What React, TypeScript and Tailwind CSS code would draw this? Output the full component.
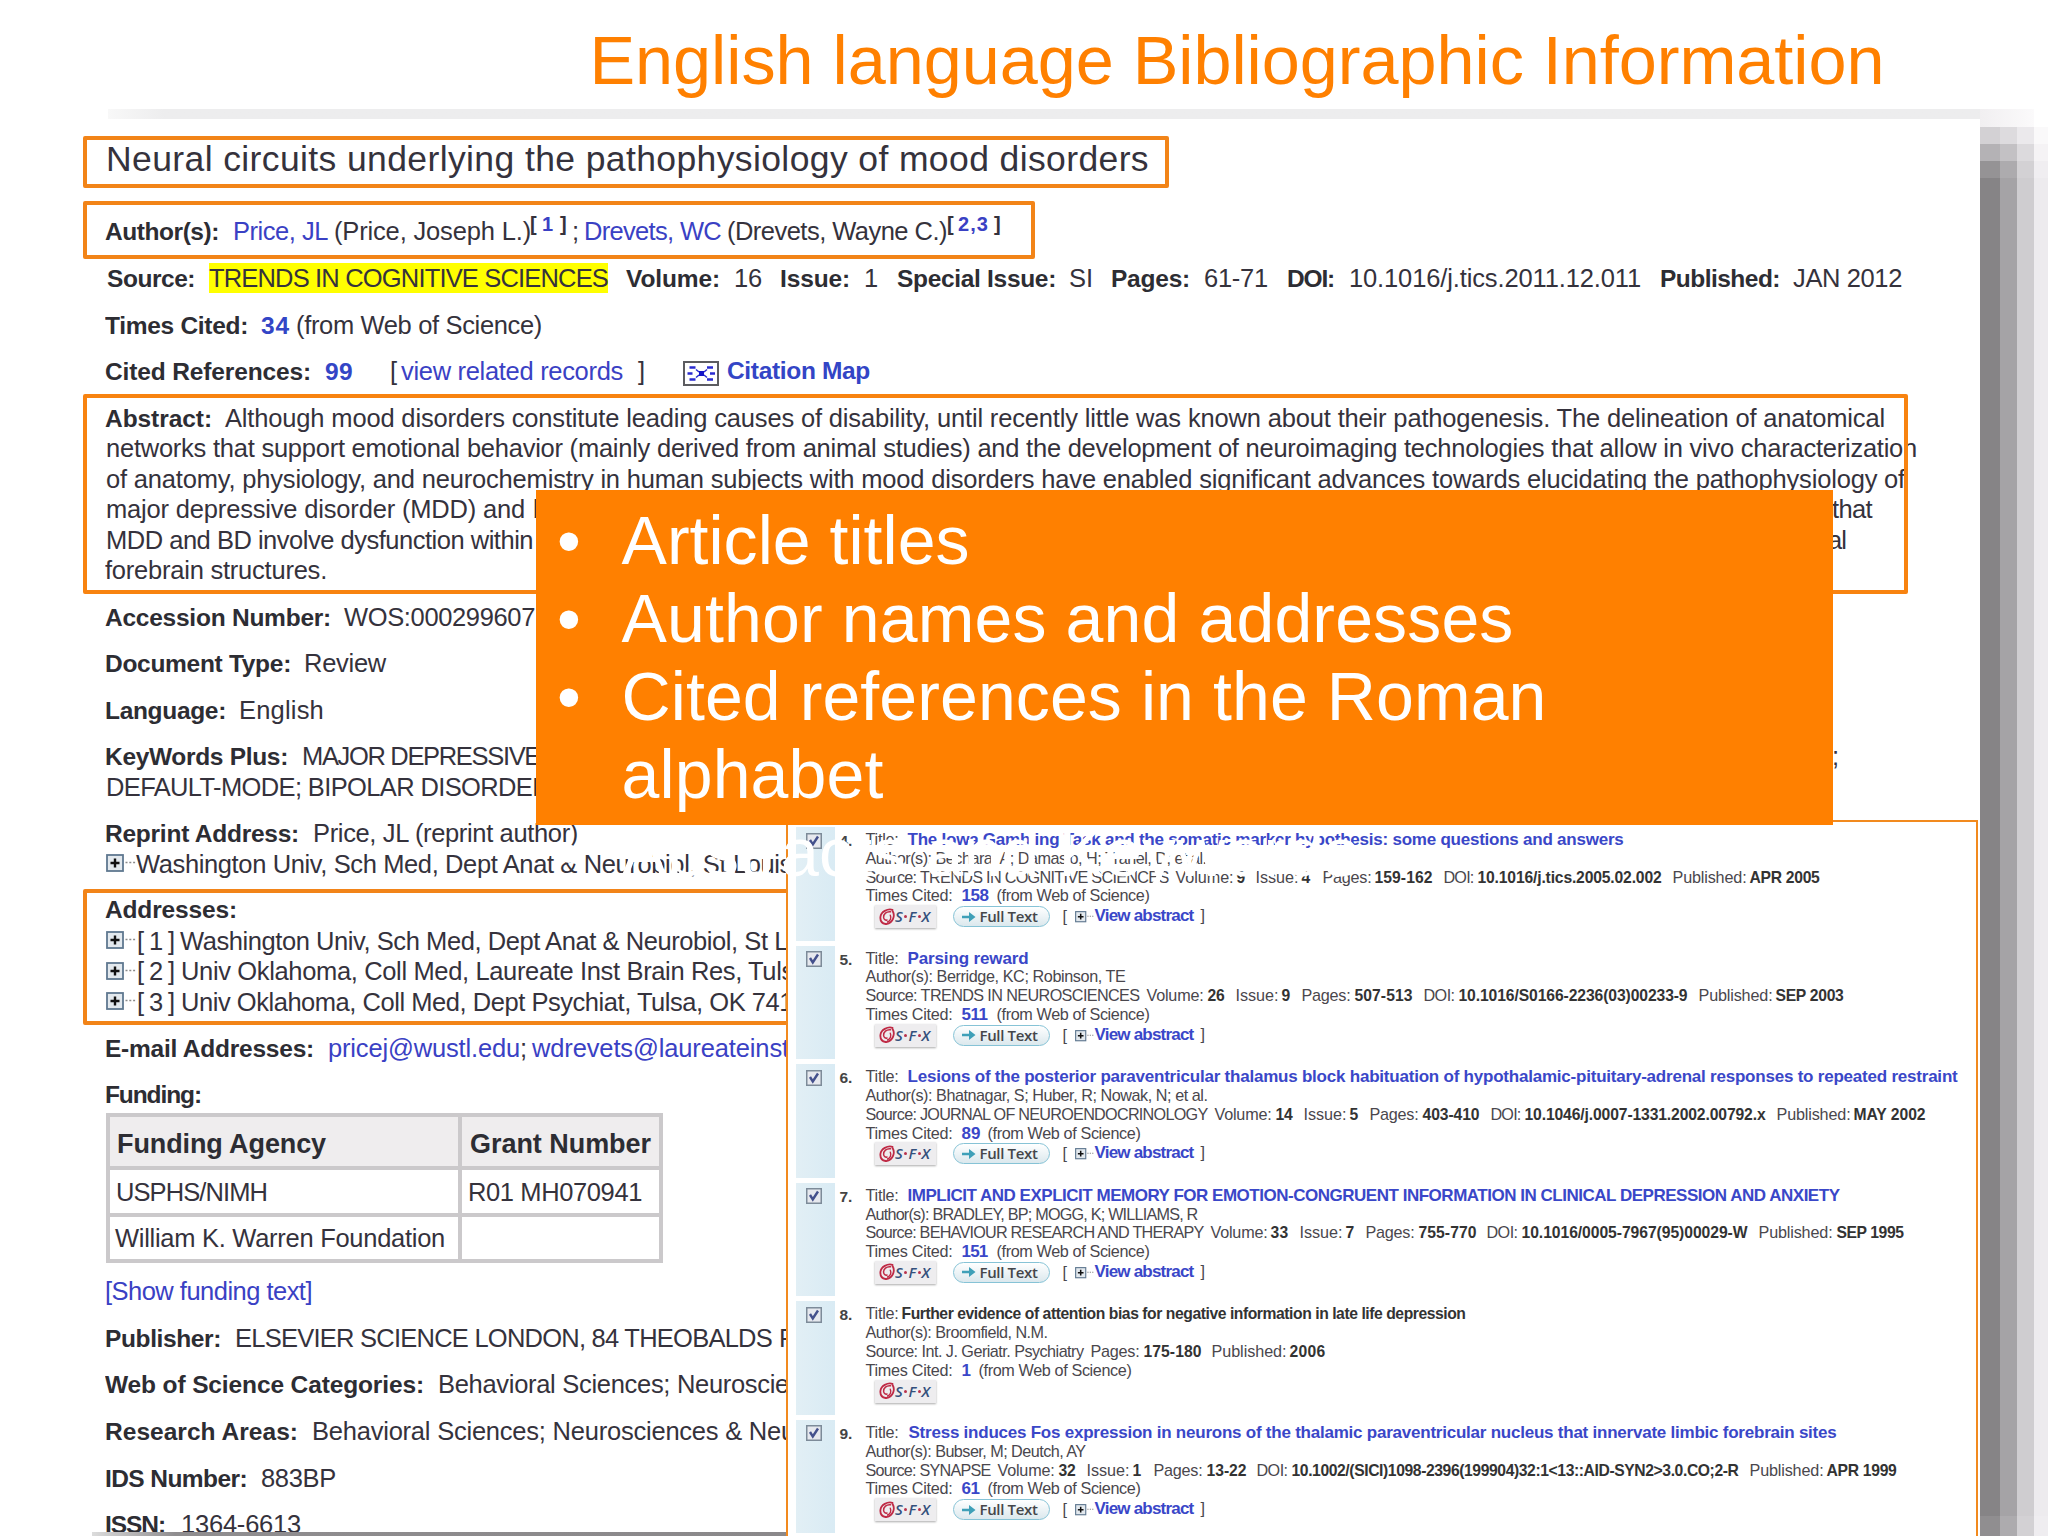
import { useLayoutEffect, useRef, useState, type ReactNode } from "react";

/** A run of text: content, left edge, right edge and an optional class. */
type Run = [text: string, x0: number, x1: number, cls?: string];

const B = "font-bold text-[24.500px] text-[#2d2d33]";
const LINK = "text-[#3a41c4]";
const BLINK = "font-bold text-[24.500px] text-[#3345c6]";

/** Tracks its text so that it fills the given width exactly. */
function Fit({ width, className = "", children }: { width: number; className?: string; children: string }) {
  const ref = useRef<HTMLSpanElement>(null);
  const [spacing, setSpacing] = useState(0);
  useLayoutEffect(() => {
    if (ref.current) {
      const natural = ref.current.getBoundingClientRect().width - spacing * children.length;
      setSpacing((width - natural) / children.length);
    }
  }, [width, children]);
  return (
    <span ref={ref} className={"whitespace-pre shrink-0 " + className} style={{ letterSpacing: spacing }}>
      {children}
    </span>
  );
}

/** One line of runs, laid out after each other from the given origin. */
function Line({ runs, origin, className = "" }: { runs: Run[]; origin: number; className?: string }) {
  return (
    <div className={"flex items-baseline " + className}>
      {runs.map(([text, x0, x1, cls], i) => {
        const previous = i === 0 ? origin : runs[i - 1][2] + 1;
        return (
          <div key={i} className="flex shrink-0" style={{ marginLeft: x0 - 1 - previous, width: x1 - x0 + 2 }}>
            <Fit width={x1 - x0 + 2} className={cls}>
              {text}
            </Fit>
          </div>
        );
      })}
    </div>
  );
}

function L({ runs, className = "" }: { runs: Run[]; className?: string }) {
  return <Line runs={runs} origin={105} className={"h-[30.43px] " + className} />;
}

function Para({ children, className = "mb-[16.2px]" }: { children: ReactNode; className?: string }) {
  return <div className={className}>{children}</div>;
}

function PlusBox({ className = "" }: { className?: string }) {
  return (
    <svg viewBox="0 0 31 19" className={"shrink-0 " + className}>
      <rect x="1" y="1" width="16" height="16" fill="#e3e9ee" stroke="#5f7890" strokeWidth="1.8" />
      <path d="M4.500 9h9M9 4.500v9" stroke="#111" strokeWidth="2.400" />
      <path d="M19.500 8.500h10" stroke="#8a8a8a" strokeWidth="1.600" strokeDasharray="2 1.800" />
    </svg>
  );
}

function AddressLine({ runs }: { runs: Run[] }) {
  return (
    <div className="flex h-[30.43px] items-center">
      <PlusBox className="mt-[-1px] ml-px h-[19px] w-[31px]" />
      <Line runs={runs} origin={137} />
    </div>
  );
}

function CitationIcon() {
  return (
    <svg viewBox="0 0 36 25" className="ml-[39px] mt-[5px] h-[25px] w-[36px] shrink-0">
      <rect x="1" y="1" width="34" height="23" fill="#fff" stroke="#5c5c60" strokeWidth="2" />
      <g stroke="#2a2bd0" strokeWidth="2.400" fill="none">
        <path d="M6.500 6.500h6M4.500 12.500h5M6.500 18.500h6M24 6.500h6M27 12.500h5M24 18.500h6" />
        <path d="M13 8.500l3 2.500M13 16.500l3-2.500M24 8.500l-3 2.500M24 16.500l-3-2.500" strokeWidth="1.500" />
      </g>
      <rect x="16" y="10" width="5" height="5" fill="#1414c8" />
    </svg>
  );
}

const CELL = "border-[#cbc9cb]";

function FundingTable() {
  return (
    <div className="mt-[3px] ml-[0.500px] grid w-[557px] grid-cols-[352.500px_200.500px] border-[#cbc9cb] border-t-4 border-l-4">
      <div className={"h-[53px] border-r-4 border-b-4 bg-[#efedee] text-[27px] pt-[11.500px] " + CELL}>
        <Line runs={[["Funding Agency", 118, 325, "font-bold text-[#2d2d33]"]]} origin={109.5} />
      </div>
      <div className={"h-[53px] border-r-4 border-b-4 bg-[#efedee] text-[27px] pt-[11.500px] " + CELL}>
        <Line runs={[["Grant Number", 471, 650, "font-bold text-[#2d2d33]"]]} origin={462} />
      </div>
      <div className={"h-[46.500px] border-r-4 border-b-4 pt-[6.500px] " + CELL}>
        <Line runs={[["USPHS/NIMH", 117, 266]]} origin={109.5} />
      </div>
      <div className={"h-[46.500px] border-r-4 border-b-4 pt-[6.500px] " + CELL}>
        <Line runs={[["R01 MH070941", 469, 641]]} origin={462} />
      </div>
      <div className={"h-[46.500px] border-r-4 border-b-4 pt-[6.500px] " + CELL}>
        <Line runs={[["William K. Warren Foundation", 116, 444]]} origin={109.5} />
      </div>
      <div className={"h-[46.500px] border-r-4 border-b-4 " + CELL} />
    </div>
  );
}

function RecordView() {
  return (
    <div className="ml-[105px] h-[1396px] w-[1870px] overflow-hidden text-[25.500px] leading-[30.43px] text-[#35323c]">
      <Line
        runs={[["Neural circuits underlying the pathophysiology of mood disorders", 107, 1148]]}
        origin={105}
        className="mt-[2px] h-[40px] pt-[6px] text-[35.500px]"
      />
      <Para className="mt-[38px] mb-[16.600px]">
        <L
          runs={[
            ["Author(s):", 106, 218, B],
            ["Price, JL", 234, 327, LINK],
            ["(Price, Joseph L.)", 335, 530],
            ["[", 531, 534, "text-[20px] font-bold -translate-y-[9px]"],
            ["1", 543, 551, "text-[20px] font-semibold -translate-y-[9px] " + LINK],
            ["]", 561, 564, "text-[20px] font-bold -translate-y-[9px]"],
            [";", 573, 577],
            ["Drevets, WC", 585, 720, LINK],
            ["(Drevets, Wayne C.)", 728, 946],
            ["[", 948, 952, "text-[20px] font-bold -translate-y-[9px]"],
            ["2,3", 959, 988, "text-[20px] font-semibold -translate-y-[9px] " + LINK],
            ["]", 995, 1000, "text-[20px] font-bold -translate-y-[9px]"],
          ]}
        />
      </Para>
      <Para>
        <L
          runs={[
            ["Source:", 108, 194, B],
            ["TRENDS IN COGNITIVE SCIENCES", 210, 607, "bg-[#ffff00]"],
            ["Volume:", 627, 719, B],
            ["16", 735, 761],
            ["Issue:", 781, 849, B],
            ["1", 865, 876],
            ["Special Issue:", 898, 1055, B],
            ["SI", 1070, 1092],
            ["Pages:", 1112, 1189, B],
            ["61-71", 1205, 1267],
            ["DOI:", 1288, 1333, B],
            ["10.1016/j.tics.2011.12.011", 1350, 1640],
            ["Published:", 1661, 1779, B],
            ["JAN 2012", 1794, 1901],
          ]}
        />
      </Para>
      <Para>
        <L runs={[["Times Cited:", 106, 247, B], ["34", 262, 289, BLINK], ["(from Web of Science)", 297, 541]]} />
      </Para>
      <Para className="mb-[16.2px] flex h-[30.43px]">
        <L
          runs={[
            ["Cited References:", 106, 310, B],
            ["99", 326, 352, BLINK],
            ["[", 391, 395],
            ["view related records", 402, 622, LINK],
            ["]", 639, 643],
          ]}
        />
        <CitationIcon />
        <Line runs={[["Citation Map", 728, 869, BLINK]]} origin={719} className="h-[30.43px]" />
      </Para>
      <Para>
        <L
          runs={[
            ["Abstract:", 106, 211, B],
            [
              "Although mood disorders constitute leading causes of disability, until recently little was known about their pathogenesis. The delineation of anatomical",
              226,
              1884,
            ],
          ]}
        />
        <L
          runs={[
            [
              "networks that support emotional behavior (mainly derived from animal studies) and the development of neuroimaging technologies that allow in vivo characterization",
              107,
              1916,
            ],
          ]}
        />
        <L
          runs={[
            [
              "of anatomy, physiology, and neurochemistry in human subjects with mood disorders have enabled significant advances towards elucidating the pathophysiology of",
              107,
              1904,
            ],
          ]}
        />
        <L runs={[["major depressive disorder (MDD) and", 107, 524], ["b", 534, 545], ["that", 1833, 1871]]} />
        <L runs={[["MDD and BD involve dysfunction within", 107, 532], ["al", 1829, 1845]]} />
        <L runs={[["forebrain structures.", 106, 326]]} />
      </Para>
      <Para>
        <L runs={[["Accession Number:", 106, 330, B], ["WOS:000299607", 345, 534]]} />
      </Para>
      <Para>
        <L runs={[["Document Type:", 106, 290, B], ["Review", 305, 385]]} />
      </Para>
      <Para>
        <L runs={[["Language:", 106, 225, B], ["English", 240, 323]]} />
      </Para>
      <Para>
        <L runs={[["KeyWords Plus:", 106, 287, B], ["MAJOR DEPRESSIVE", 303, 539], [";", 1833, 1837]]} />
        <L runs={[["DEFAULT-MODE; BIPOLAR DISORDER", 107, 549]]} />
      </Para>
      <Para>
        <L runs={[["Reprint Address:", 106, 298, B], ["Price, JL (reprint author)", 314, 577]]} />
        <AddressLine runs={[["Washington Univ, Sch Med, Dept Anat & Neurobiol, St Louis", 137, 791]]} />
      </Para>
      <Para>
        <L runs={[["Addresses:", 106, 236, B]]} />
        <AddressLine runs={[["[ 1 ]", 138, 173], ["Washington Univ, Sch Med, Dept Anat & Neurobiol, St L", 181, 787]]} />
        <AddressLine runs={[["[ 2 ]", 138, 173], ["Univ Oklahoma, Coll Med, Laureate Inst Brain Res,", 182, 741], ["Tuls", 749, 793]]} />
        <AddressLine runs={[["[ 3 ]", 138, 173], ["Univ Oklahoma, Coll Med, Dept Psychiat, Tulsa, OK 741", 182, 792]]} />
      </Para>
      <Para>
        <L
          runs={[
            ["E-mail Addresses:", 106, 313, B],
            ["pricej@wustl.edu", 329, 519, LINK],
            [";", 521, 525],
            ["wdrevets@laureateinst", 533, 788, LINK],
          ]}
        />
      </Para>
      <Para className="">
        <L runs={[["Funding:", 106, 200, B]]} />
        <FundingTable />
      </Para>
      <Para className="mt-[13px] mb-[16.1px]">
        <L runs={[["[Show funding text]", 106, 311, LINK]]} />
      </Para>
      <Para>
        <L runs={[["Publisher:", 106, 220, B], ["ELSEVIER SCIENCE LONDON, 84 THEOBALDS", 236, 771], ["R", 780, 796]]} />
      </Para>
      <Para>
        <L runs={[["Web of Science Categories:", 106, 423, B], ["Behavioral Sciences; Neuroscie", 439, 788]]} />
      </Para>
      <Para>
        <L runs={[["Research Areas:", 106, 297, B], ["Behavioral Sciences; Neurosciences & Neu", 313, 794]]} />
      </Para>
      <Para>
        <L runs={[["IDS Number:", 106, 246, B], ["883BP", 262, 335]]} />
      </Para>
      <Para>
        <L runs={[["ISSN:", 106, 164, B], ["1364-6613", 182, 300]]} />
      </Para>
    </div>
  );
}

type Item = { no: string; title: Run; authors: Run; source: Run[]; cited: Run; from: [number, number]; full?: boolean };

const T = "text-[17px] font-bold text-[#3a47c8]";
const N = "text-[15.700px] font-bold text-[#333]";

const items: Item[] = [
  {
    no: "4.",
    title: ["The Iowa Gambling Task and the somatic marker hypothesis: some questions and answers", 909, 1623, T],
    authors: ["Author(s): Bechara, A; Damasio, H; Tranel, D; et al.", 867, 1206],
    source: [
      ["Source: TRENDS IN COGNITIVE SCIENCES", 867, 1168],
      ["Volume:", 1177, 1233],
      ["9", 1238, 1245, N],
      ["Issue:", 1257, 1298],
      ["4", 1303, 1311, N],
      ["Pages:", 1324, 1371],
      ["159-162", 1376, 1432, N],
      ["DOI:", 1445, 1473],
      ["10.1016/j.tics.2005.02.002", 1479, 1661, N],
      ["Published:", 1674, 1746],
      ["APR 2005", 1751, 1819, N],
    ],
    cited: ["158", 963, 988, T],
    from: [998, 1149],
    full: true,
  },
  {
    no: "5.",
    title: ["Parsing reward", 909, 1028, T],
    authors: ["Author(s): Berridge, KC; Robinson, TE", 867, 1125],
    source: [
      ["Source: TRENDS IN NEUROSCIENCES", 867, 1139],
      ["Volume:", 1148, 1203],
      ["26", 1209, 1224, N],
      ["Issue:", 1237, 1278],
      ["9", 1283, 1290, N],
      ["Pages:", 1303, 1350],
      ["507-513", 1356, 1412, N],
      ["DOI:", 1425, 1454],
      ["10.1016/S0166-2236(03)00233-9", 1460, 1687, N],
      ["Published:", 1700, 1772],
      ["SEP 2003", 1777, 1843, N],
    ],
    cited: ["511", 963, 987, T],
    from: [998, 1149],
    full: true,
  },
  {
    no: "6.",
    title: [
      "Lesions of the posterior paraventricular thalamus block habituation of hypothalamic-pituitary-adrenal responses to repeated restraint",
      909,
      1957,
      T,
    ],
    authors: ["Author(s): Bhatnagar, S; Huber, R; Nowak, N; et al.", 867, 1207],
    source: [
      ["Source: JOURNAL OF NEUROENDOCRINOLOGY", 867, 1207],
      ["Volume:", 1216, 1271],
      ["14", 1277, 1292, N],
      ["Issue:", 1305, 1346],
      ["5", 1351, 1358, N],
      ["Pages:", 1371, 1418],
      ["403-410", 1424, 1479, N],
      ["DOI:", 1492, 1520],
      ["10.1046/j.0007-1331.2002.00792.x", 1526, 1765, N],
      ["Published:", 1778, 1850],
      ["MAY 2002", 1855, 1925, N],
    ],
    cited: ["89", 963, 980, T],
    from: [989, 1140],
    full: true,
  },
  {
    no: "7.",
    title: ["IMPLICIT AND EXPLICIT MEMORY FOR EMOTION-CONGRUENT INFORMATION IN CLINICAL DEPRESSION AND ANXIETY", 909, 1839, T],
    authors: ["Author(s): BRADLEY, BP; MOGG, K; WILLIAMS, R", 867, 1197],
    source: [
      ["Source: BEHAVIOUR RESEARCH AND THERAPY", 867, 1203],
      ["Volume:", 1212, 1267],
      ["33", 1272, 1288, N],
      ["Issue:", 1301, 1342],
      ["7", 1347, 1354, N],
      ["Pages:", 1367, 1414],
      ["755-770", 1420, 1476, N],
      ["DOI:", 1488, 1517],
      ["10.1016/0005-7967(95)00029-W", 1523, 1747, N],
      ["Published:", 1760, 1832],
      ["SEP 1995", 1838, 1903, N],
    ],
    cited: ["151", 963, 987, T],
    from: [998, 1149],
    full: true,
  },
  {
    no: "8.",
    title: ["Further evidence of attention bias for negative information in late life depression", 903, 1465, N],
    authors: ["Author(s): Broomfield, N.M.", 867, 1047],
    source: [
      ["Source: Int. J. Geriatr. Psychiatry", 867, 1083],
      ["Pages:", 1092, 1139],
      ["175-180", 1145, 1201, N],
      ["Published:", 1213, 1286],
      ["2006", 1291, 1325, N],
    ],
    cited: ["1", 963, 970, T],
    from: [980, 1131],
  },
  {
    no: "9.",
    title: ["Stress induces Fos expression in neurons of the thalamic paraventricular nucleus that innervate limbic forebrain sites", 910, 1836, T],
    authors: ["Author(s): Bubser, M; Deutch, AY", 867, 1085],
    source: [
      ["Source: SYNAPSE", 867, 990],
      ["Volume:", 999, 1054],
      ["32", 1060, 1075, N],
      ["Issue:", 1088, 1129],
      ["1", 1134, 1141, N],
      ["Pages:", 1155, 1202],
      ["13-22", 1208, 1246, N],
      ["DOI:", 1258, 1287],
      ["10.1002/(SICI)1098-2396(199904)32:1<13::AID-SYN2>3.0.CO;2-R", 1293, 1738, N],
      ["Published:", 1751, 1823],
      ["APR 1999", 1828, 1896, N],
    ],
    cited: ["61", 963, 979, T],
    from: [989, 1140],
    full: true,
  },
];

function SfxButton() {
  return (
    <div className="ml-[9px] flex h-[23px] w-[61px] items-center bg-[#eeedef] shadow-[0_1px_2px_#aaa]">
      <svg viewBox="0 0 16 18" className="ml-1 h-[18px] w-[16px] shrink-0" fill="none" stroke="#bf2a45" strokeLinecap="round">
        <path d="M13.500 1.800C8.500.5 2 3.500 1.400 9c-.3 4 2 6.500 5.200 7" strokeWidth="1.800" />
        <path d="M11.500 3.800C7.500 3.300 4.300 6 4.600 9.500c.2 2 1.800 3 3.400 2.500" strokeWidth="1.500" />
        <path d="M13.600 3c2.600 4.500 1 11.500-6.400 13.200" strokeWidth="1.800" />
        <path d="M8.500 14c3-1 4-4 2.800-6.800" strokeWidth="1.400" />
      </svg>
      <div className="ml-[0.500px] flex items-center font-['Open_Sans',sans-serif] text-[15px] font-semibold italic leading-none text-[#34507c]">
        <span className="w-[8px]">S</span>
        <span className="mr-[1.500px] ml-px h-[3px] w-[3px] rounded-full bg-[#b8324c]" />
        <span className="w-[8px]">F</span>
        <span className="mx-px h-[3px] w-[3px] rounded-full bg-[#b8324c]" />
        <span>X</span>
      </div>
    </div>
  );
}

function FullTextButton() {
  return (
    <div className="ml-[17px] flex h-[21px] w-[97px] items-center rounded-full border-[1.500px] border-[#86c3d6] bg-linear-to-b from-white to-[#dbe8ed]">
      <svg viewBox="0 0 14 12" className="ml-[8px] h-[12px] w-[14px] shrink-0" fill="#3fa0b8">
        <path d="M0 4.700h7V1l6.500 5L7 11V7.300H0z" />
      </svg>
      <div className="ml-[4px] font-['Open_Sans',sans-serif] text-[15px] leading-none font-semibold text-[#45464a]">
        <Fit width={58}>Full Text</Fit>
      </div>
    </div>
  );
}

function Checkbox() {
  return (
    <svg viewBox="0 0 16 16" className="h-[16px] w-[16px]">
      <rect x="0.750" y="0.750" width="14.500" height="14.500" fill="#e6e8ee" stroke="#7d8b99" strokeWidth="1.500" />
      <path d="M4 7l2.800 4.500L12 3.500" fill="none" stroke="#44508c" strokeWidth="2.400" />
    </svg>
  );
}

function ResultItem({ item }: { item: Item }) {
  return (
    <div className="mb-[5.100px] flex h-[113.500px] text-[16.200px] leading-[18.800px] text-[#4a474d]">
      <div className="flex w-[38.500px] justify-center bg-linear-to-r from-[#e2eff5] to-[#d9ebf4] pt-[5.500px] pr-[3px]">
        <Checkbox />
      </div>
      <div className="w-[31px] pt-[5px] pl-[5px] text-[15.500px] font-bold text-[#444]">{item.no}</div>
      <div className="flex flex-col pt-[3px]">
        <Line runs={[["Title:", 867, 898], item.title]} origin={866} className="h-[18.800px]" />
        <Line runs={[item.authors]} origin={866} className="h-[18.800px]" />
        <Line runs={item.source} origin={866} className="h-[18.800px]" />
        <Line
          runs={[["Times Cited:", 867, 952], item.cited, ["(from Web of Science)", item.from[0], item.from[1]]]}
          origin={866}
          className="h-[18.800px]"
        />
        <div className="flex h-[23px] items-center">
          <SfxButton />
          {item.full && (
            <>
              <FullTextButton />
              <Line runs={[["[", 1064, 1067]]} origin={1050} />
              <PlusBox className="mt-px ml-[7px] h-[12px] w-[19.600px]" />
              <Line runs={[["View abstract", 1096, 1193, T], ["]", 1202, 1206]]} origin={1094.6} className="-mt-px" />
            </>
          )}
        </div>
      </div>
    </div>
  );
}

function ResultsPanel() {
  return (
    <div className="absolute top-[820px] left-[786px] h-[720px] w-[1192px] border-[2.500px] border-[#f28a1e] bg-white pt-[5px] pl-[8px]">
      {items.map((item) => (
        <ResultItem key={item.no} item={item} />
      ))}
    </div>
  );
}

function Bullet({ children, width }: { children: string; width: number }) {
  return (
    <div className="flex h-[78px] items-center">
      <span className="w-[64.500px] shrink-0">•</span>
      <Fit width={width}>{children}</Fit>
    </div>
  );
}

function Callout() {
  return (
    <div className="absolute top-[490px] left-[536px] h-[335px] w-[1297px] bg-[#ff8000] pt-[11px] pl-[21px] text-[68px] leading-[78px] text-white">
      <Bullet width={348}>Article titles</Bullet>
      <Bullet width={892}>Author names and addresses</Bullet>
      <Bullet width={925}>Cited references in the Roman</Bullet>
      <div className="flex h-[78px] items-center pl-[64.500px]">
        <Fit width={262}>alphabet</Fit>
      </div>
      <Bullet width={737}>Abstracts and Keywords</Bullet>
    </div>
  );
}

function Shadow() {
  return (
    <div className="absolute top-[109px] left-[1980px] flex h-[1427px] w-[68px] flex-col overflow-hidden">
      <div className="h-[18px] w-[54px] bg-linear-to-r from-[#f1eff1] to-[#fbfafb]" />
      <div className="grid h-[17px] grid-cols-[20px_17px_17px_14px]">
        <i className="bg-[#d3d1d4]" /><i className="bg-[#dddbde]" /><i className="bg-[#ebe9ec]" /><i className="bg-[#faf9fa]" />
      </div>
      <div className="grid h-[17px] grid-cols-[20px_17px_17px_14px]">
        <i className="bg-[#b4b2b5]" /><i className="bg-[#c3c1c4]" /><i className="bg-[#dcdadd]" /><i className="bg-[#f5f3f5]" />
      </div>
      <div className="grid h-[17px] grid-cols-[20px_17px_17px_14px]">
        <i className="bg-[#959395]" /><i className="bg-[#adabae]" /><i className="bg-[#d3d1d4]" /><i className="bg-[#f0eef1]" />
      </div>
      <div className="grid flex-1 grid-cols-[20px_17px_17px_14px]">
        <i className="bg-[#868486]" /><i className="bg-[#a5a3a6]" /><i className="bg-[#cfcdd0]" /><i className="bg-[#edebee]" />
      </div>
      <div className="grid h-[20px] grid-cols-[20px_17px_17px_14px]">
        <i className="bg-[#908e90]" /><i className="bg-[#adabae]" /><i className="bg-[#d3d1d4]" /><i className="bg-[#efedf0]" />
      </div>
    </div>
  );
}

export default function App() {
  return (
    <div className="relative h-[1536px] w-[2048px] overflow-hidden bg-white font-['Liberation_Sans',Arial,sans-serif]">
      <header className="flex h-[109px] items-start pt-[21px] pl-[589.500px] text-[68.400px] leading-[78px] text-[#ff8000]">
        <Fit width={1295}>English language Bibliographic Information</Fit>
      </header>
      <div className="ml-[108px] h-[10px] w-[1872px] bg-linear-to-r from-[#f8f8f8] via-[#ededee] via-3% to-[#ededee]" />
      <div className="ml-[83px] h-[17px]" />
      <RecordView />
      <div className="ml-[92px] h-[4px] w-[694px] bg-linear-to-r from-[#dcdcdc] via-[#8f8d8f] via-12% to-[#8a888a]" />
      <Shadow />
      <div className="absolute top-[136px] left-[83px] h-[52px] w-[1085.500px] rounded-[2px] border-4 border-[#f28418]" />
      <div className="absolute top-[201px] left-[83px] h-[58px] w-[952px] rounded-[2px] border-4 border-[#f28418]" />
      <div className="absolute top-[394px] left-[83px] h-[200px] w-[1825px] rounded-[2px] border-4 border-[#f88310]" />
      <div className="absolute top-[889px] left-[83px] h-[136px] w-[900px] rounded-[2px] border-4 border-[#f28418]" />
      <ResultsPanel />
      <Callout />
    </div>
  );
}
